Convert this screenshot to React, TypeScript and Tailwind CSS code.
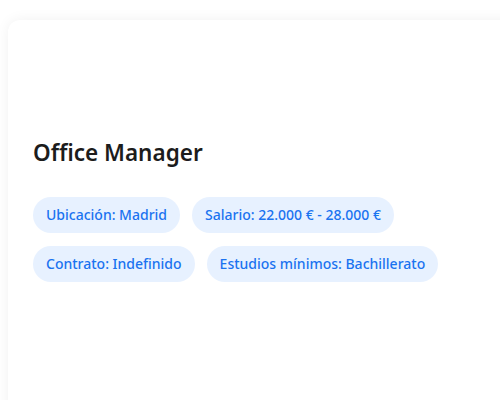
import React from "react";

const tags = [
  "Ubicación: Madrid",
  "Salario: 22.000 € - 28.000 €",
  "Contrato: Indefinido",
  "Estudios mínimos: Bachillerato",
];

export default function App() {
  return (
    <div className="h-[400px] bg-white pl-2 pt-5 overflow-hidden" style={{ fontFamily: '"Noto Sans", sans-serif' }}>
      <div className="min-h-[420px] w-[520px] rounded-tl-xl bg-white pl-[25px] pt-[117px] shadow-[0_0_14px_rgba(0,0,0,0.06)]">
        <h1 className="text-[22.5px] font-semibold leading-8 text-[#1c1c1c]">Office Manager</h1>
        <div className="mt-[28px] flex w-[420px] flex-wrap gap-x-3 gap-y-[13px]">
          {tags.map((t) => (
            <span
              key={t}
              className="rounded-full bg-[#e7f1ff] px-[13px] py-2 text-sm leading-5 font-medium text-[#1a73f0]"
            >
              {t}
            </span>
          ))}
        </div>
      </div>
    </div>
  );
}
